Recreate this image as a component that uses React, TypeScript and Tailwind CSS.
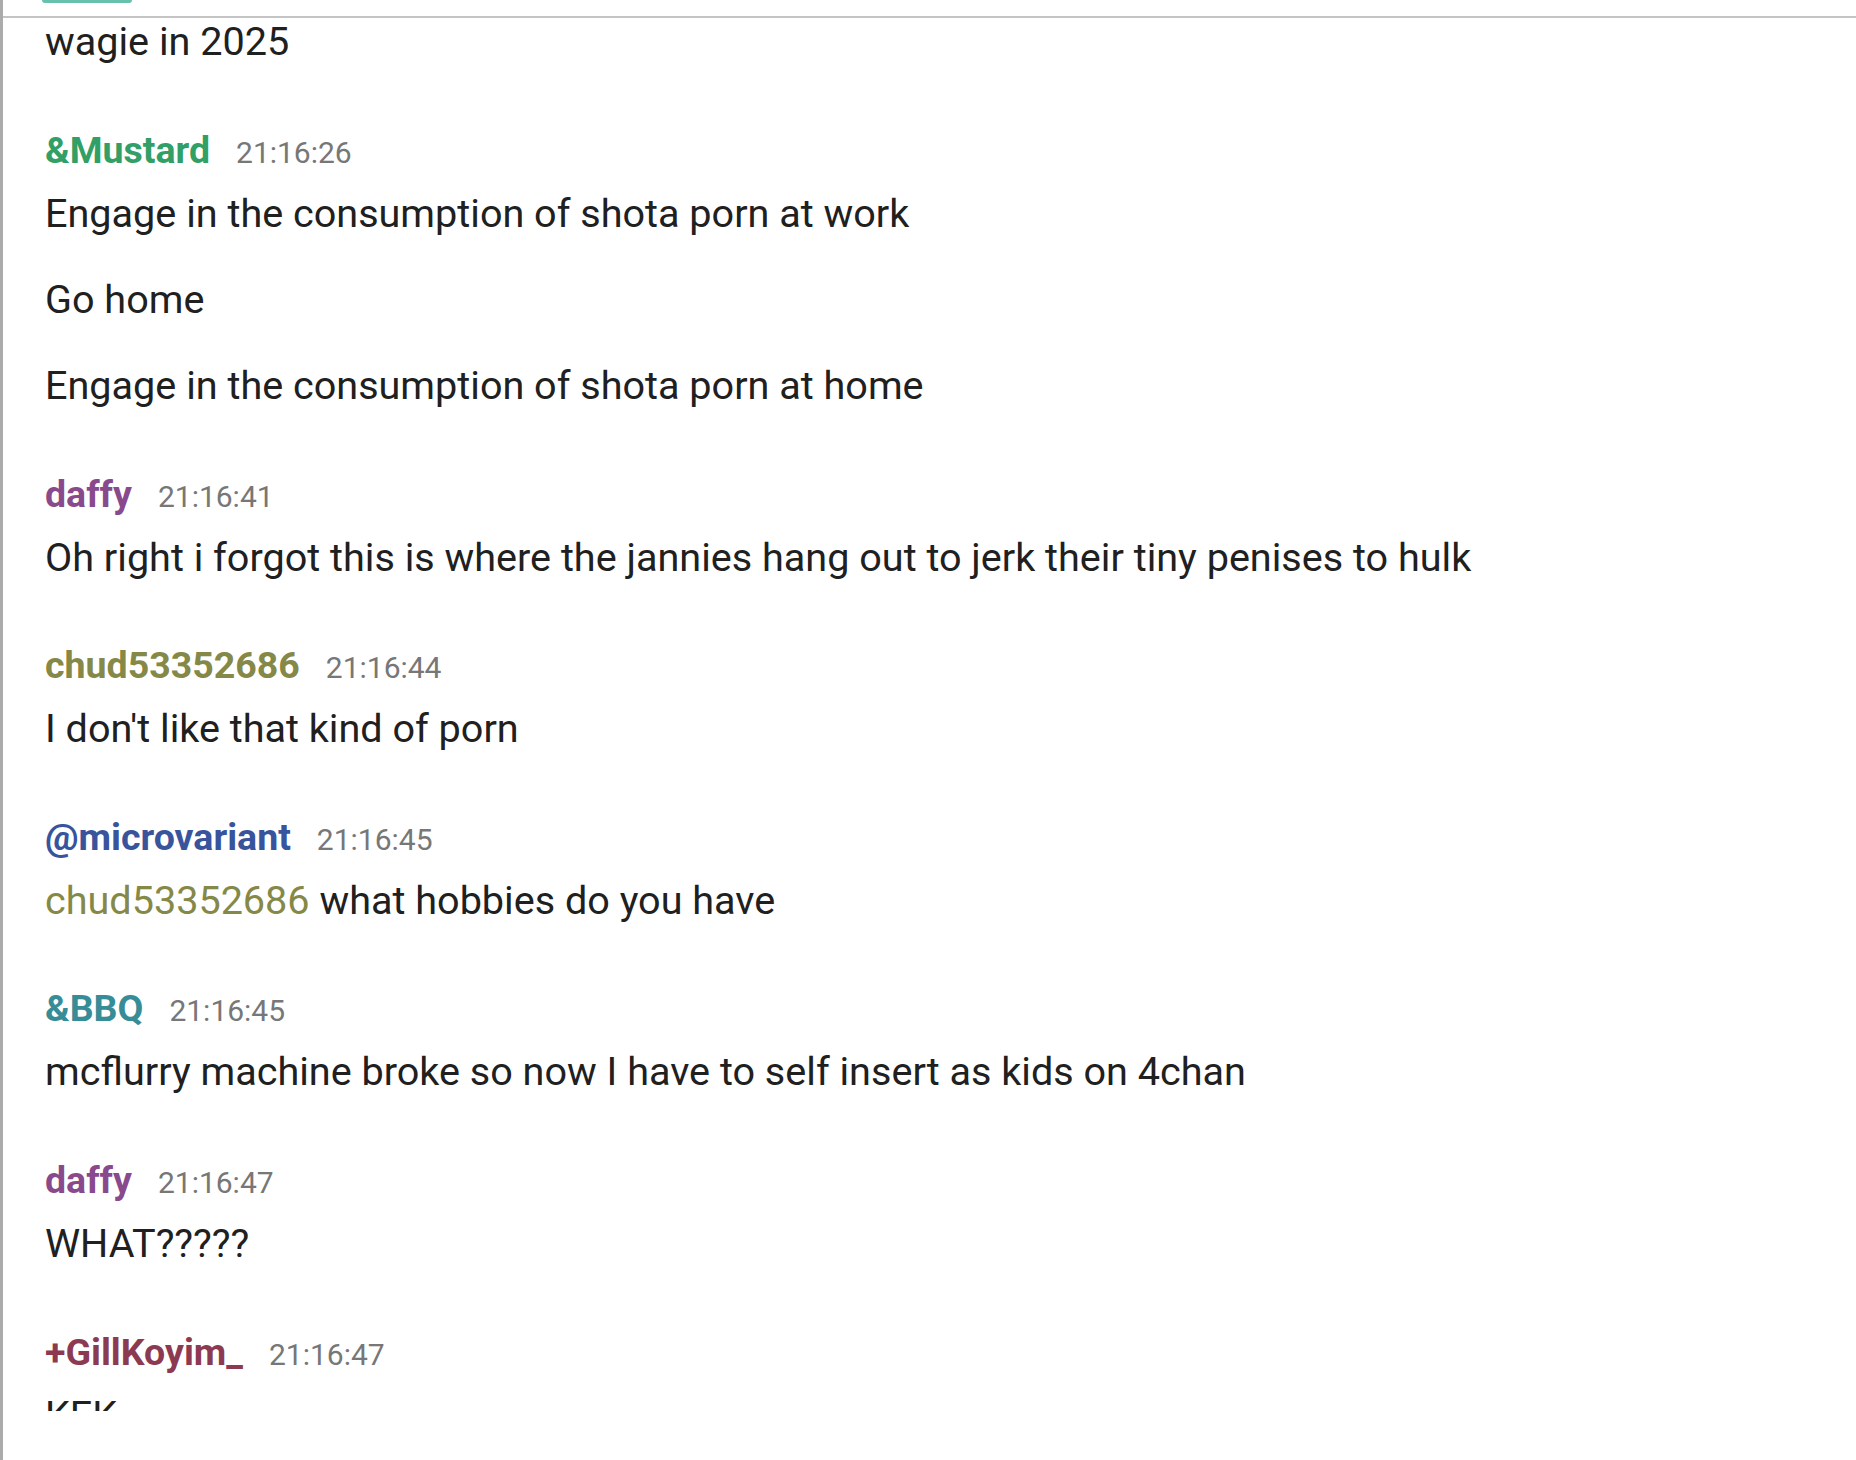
type Msg = {
  nick: string
  color: string
  time: string
  lines: React.ReactNode[]
}

const messages: Msg[] = [
  {
    nick: "&Mustard",
    color: "text-[#319f66]",
    time: "21:16:26",
    lines: [
      "Engage in the consumption of shota porn at work",
      "Go home",
      "Engage in the consumption of shota porn at home",
    ],
  },
  {
    nick: "daffy",
    color: "text-[#884a8c]",
    time: "21:16:41",
    lines: ["Oh right i forgot this is where the jannies hang out to jerk their tiny penises to hulk"],
  },
  {
    nick: "chud53352686",
    color: "text-[#858847]",
    time: "21:16:44",
    lines: ["I don't like that kind of porn"],
  },
  {
    nick: "@microvariant",
    color: "text-[#37549c]",
    time: "21:16:45",
    lines: [
      <>
        <span className="text-[#858847]">chud53352686</span> what hobbies do you have
      </>,
    ],
  },
  {
    nick: "&BBQ",
    color: "text-[#378d97]",
    time: "21:16:45",
    lines: ["mcflurry machine broke so now I have to self insert as kids on 4chan"],
  },
  {
    nick: "daffy",
    color: "text-[#884a8c]",
    time: "21:16:47",
    lines: ["WHAT?????"],
  },
  {
    nick: "+GillKoyim_",
    color: "text-[#8c3a51]",
    time: "21:16:47",
    lines: ["KEK"],
  },
]

const Message = ({ msg }: { msg: Msg }) => {
  return (
    <div className="flex flex-col">
      <div className="flex items-baseline h-[44px] leading-[41px]">
        <span className={`text-[37.5px] font-bold ${msg.color}`}>{msg.nick}</span>
        <span className="ml-[26px] text-[30px] text-[#777777]">{msg.time}</span>
      </div>
      <div className="mt-[16px] flex flex-col gap-[39px]">
        {msg.lines.map((line, i) => (
          <p key={i} className="text-[39.6px] leading-[47px] text-[#202020]">
            {line}
          </p>
        ))}
      </div>
    </div>
  )
}

export default function App() {
  return (
    <div
      className="h-[1460px] w-full bg-white border-l-[3px] border-[#ababab] flex flex-col overflow-hidden"
      style={{ fontFamily: "Roboto, 'Noto Sans', sans-serif" }}
    >
      {/* tab strip, mostly scrolled off */}
      <div className="h-[18px] shrink-0 border-b-2 border-[#c4c4c4] pl-[39px]">
        <div className="h-[3px] w-[90px] rounded-b bg-[#66c2ac]" />
      </div>

      {/* chat log */}
      <div className="h-[1393px] shrink-0 overflow-hidden pl-[42px] pt-[0.4px]">
        <div className="flex flex-col gap-[64.6px]">
          <p className="text-[39.6px] leading-[47px] text-[#202020]">wagie in 2025</p>
          {messages.map((m, i) => (
            <Message key={i} msg={m} />
          ))}
        </div>
      </div>
    </div>
  )
}
